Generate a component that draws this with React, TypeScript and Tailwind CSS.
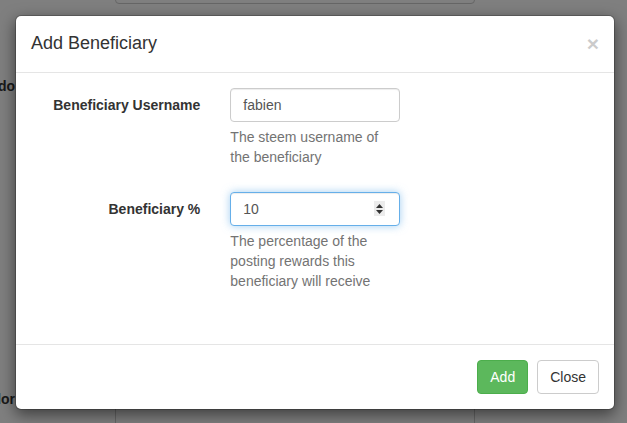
import React from "react";

export default function App() {
  return (
    <div
      className="relative w-[627px] h-[423px] overflow-hidden bg-white text-[14px] leading-[20px] text-[#333]"
      style={{ fontFamily: '"Liberation Sans", Arial, sans-serif' }}
    >
      {/* page behind the backdrop */}
      <div className="absolute left-[115px] top-[-30px] w-[360px] h-[34px] rounded border border-[#ccc] bg-white" />
      <div className="absolute right-[612px] top-[76px] whitespace-nowrap font-bold">Memo do</div>
      <div className="absolute right-[612px] top-[389px] whitespace-nowrap font-bold">Vendor</div>
      <div className="absolute left-[115px] top-[400px] w-[360px] h-[34px] rounded border border-[#ccc] bg-white" />

      {/* backdrop */}
      <div className="absolute inset-0 bg-black/50" />

      {/* modal */}
      <div className="absolute left-[15px] top-[15px] w-[600px] rounded-[6px] border border-black/20 bg-white shadow-[0_5px_15px_rgba(0,0,0,0.5)] bg-clip-padding">
        <div className="flex items-start justify-between border-b border-[#e5e5e5] px-[15px] py-[15px]">
          <h4 className="m-0 text-[18px] leading-[25.7px] font-medium text-[#333]">Add Beneficiary</h4>
          <button className="mt-[2px] text-[21px] font-bold leading-none text-black opacity-20">×</button>
        </div>

        <div className="px-[15px] pt-[15px] pb-[28px]">
          {/* row 1 */}
          <div className="mx-[-15px] mb-[15px] flex">
            <label className="w-[199.33px] px-[15px] pt-[7px] text-right font-bold">Beneficiary Username</label>
            <div className="w-[199.33px] px-[15px]">
              <input
                readOnly
                value="fabien"
                className="block h-[34px] w-full rounded border border-[#ccc] bg-white px-[12px] py-[6px] text-[14px] text-[#555] shadow-[inset_0_1px_1px_rgba(0,0,0,0.075)] outline-none"
              />
              <p className="mt-[5px] mb-[10px] text-[#737373]">The steem username of the beneficiary</p>
            </div>
          </div>

          {/* row 2 */}
          <div className="mx-[-15px] mb-[15px] flex">
            <label className="w-[199.33px] px-[15px] pt-[7px] text-right font-bold">Beneficiary %</label>
            <div className="w-[199.33px] px-[15px]">
              <div className="flex h-[34px] w-full items-center rounded border border-[#66afe9] bg-white pl-[12px] pr-[14px] shadow-[inset_0_1px_1px_rgba(0,0,0,0.075),0_0_8px_rgba(102,175,233,0.6)]">
                <span className="flex-1 text-[#555]">10</span>
                <span className="flex h-[15px] w-[11px] flex-col items-center justify-center gap-[2px] bg-[#ececec]">
                  <svg width="7" height="4" viewBox="0 0 7 4"><path d="M0 4 L3.5 0 L7 4 Z" fill="#333" /></svg>
                  <svg width="7" height="4" viewBox="0 0 7 4"><path d="M0 0 L3.5 4 L7 0 Z" fill="#333" /></svg>
                </span>
              </div>
              <p className="mt-[5px] mb-[10px] text-[#737373]">The percentage of the posting rewards this beneficiary will receive</p>
            </div>
          </div>
        </div>

        <div className="flex justify-end gap-[9px] border-t border-[#e5e5e5] p-[15px]">
          <button className="h-[34px] rounded border border-[#4cae4c] bg-[#5cb85c] px-[12px] text-[14px] text-white">Add</button>
          <button className="h-[34px] rounded border border-[#ccc] bg-white px-[12px] text-[14px] text-[#333]">Close</button>
        </div>
      </div>
    </div>
  );
}
